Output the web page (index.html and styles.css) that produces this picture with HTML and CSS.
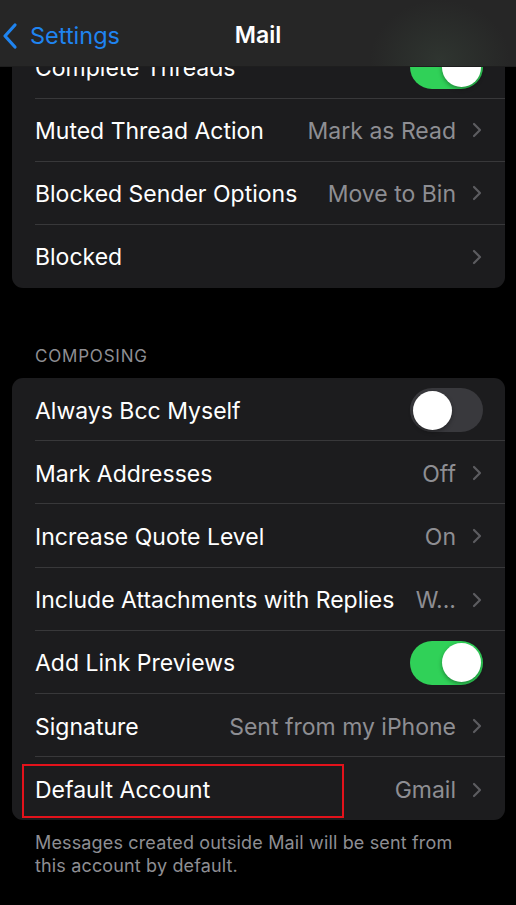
FILE: index.html
```html
<!DOCTYPE html>
<html lang="en">
<head>
    <meta charset="UTF-8">
    <meta name="viewport" content="width=device-width, initial-scale=1.0">
    <title>Mail</title>
    <link rel="stylesheet" href="styles.css">
</head>
<body>
    <!-- Barra de navegação (fica por cima da lista) -->
    <div class="navbar">
        <div class="back">
            <svg class="back-icon" width="18" height="28" viewBox="0 0 18 28">
                <path d="M14 3 L4 14 L14 25" fill="none" stroke="#1f84f0" stroke-width="3.2" stroke-linecap="round" stroke-linejoin="round"/>
            </svg>
            <span>Settings</span>
        </div>
        <div class="nav-title">Mail</div>
    </div>

    <div class="page">
        <div class="card card-top">
            <div class="row">
                <div class="row-body">
                    <span class="label">Complete Threads</span>
                    <span class="toggle on"><span class="knob"></span></span>
                </div>
            </div>
            <div class="row">
                <div class="row-body">
                    <span class="label">Muted Thread Action</span>
                    <span class="value">Mark as Read</span>
                    <svg class="chevron" width="10" height="16" viewBox="0 0 10 16"><path d="M2 2 L8 8 L2 14" fill="none" stroke="#5c5c60" stroke-width="2.2" stroke-linecap="round" stroke-linejoin="round"/></svg>
                </div>
            </div>
            <div class="row">
                <div class="row-body">
                    <span class="label">Blocked Sender Options</span>
                    <span class="value">Move to Bin</span>
                    <svg class="chevron" width="10" height="16" viewBox="0 0 10 16"><path d="M2 2 L8 8 L2 14" fill="none" stroke="#5c5c60" stroke-width="2.2" stroke-linecap="round" stroke-linejoin="round"/></svg>
                </div>
            </div>
            <div class="row">
                <div class="row-body">
                    <span class="label">Blocked</span>
                    <span class="value"></span>
                    <svg class="chevron" width="10" height="16" viewBox="0 0 10 16"><path d="M2 2 L8 8 L2 14" fill="none" stroke="#5c5c60" stroke-width="2.2" stroke-linecap="round" stroke-linejoin="round"/></svg>
                </div>
            </div>
        </div>

        <div class="section-header">COMPOSING</div>

        <div class="card card-composing">
            <div class="row">
                <div class="row-body">
                    <span class="label">Always Bcc Myself</span>
                    <span class="toggle"><span class="knob"></span></span>
                </div>
            </div>
            <div class="row">
                <div class="row-body">
                    <span class="label">Mark Addresses</span>
                    <span class="value">Off</span>
                    <svg class="chevron" width="10" height="16" viewBox="0 0 10 16"><path d="M2 2 L8 8 L2 14" fill="none" stroke="#5c5c60" stroke-width="2.2" stroke-linecap="round" stroke-linejoin="round"/></svg>
                </div>
            </div>
            <div class="row">
                <div class="row-body">
                    <span class="label">Increase Quote Level</span>
                    <span class="value">On</span>
                    <svg class="chevron" width="10" height="16" viewBox="0 0 10 16"><path d="M2 2 L8 8 L2 14" fill="none" stroke="#5c5c60" stroke-width="2.2" stroke-linecap="round" stroke-linejoin="round"/></svg>
                </div>
            </div>
            <div class="row">
                <div class="row-body">
                    <span class="label">Include Attachments with Replies</span>
                    <span class="value">W...</span>
                    <svg class="chevron" width="10" height="16" viewBox="0 0 10 16"><path d="M2 2 L8 8 L2 14" fill="none" stroke="#5c5c60" stroke-width="2.2" stroke-linecap="round" stroke-linejoin="round"/></svg>
                </div>
            </div>
            <div class="row">
                <div class="row-body">
                    <span class="label">Add Link Previews</span>
                    <span class="toggle on"><span class="knob"></span></span>
                </div>
            </div>
            <div class="row">
                <div class="row-body">
                    <span class="label">Signature</span>
                    <span class="value">Sent from my iPhone</span>
                    <svg class="chevron" width="10" height="16" viewBox="0 0 10 16"><path d="M2 2 L8 8 L2 14" fill="none" stroke="#5c5c60" stroke-width="2.2" stroke-linecap="round" stroke-linejoin="round"/></svg>
                </div>
            </div>
            <div class="row row-marked">
                <div class="row-body">
                    <span class="label">Default Account</span>
                    <span class="value">Gmail</span>
                    <svg class="chevron" width="10" height="16" viewBox="0 0 10 16"><path d="M2 2 L8 8 L2 14" fill="none" stroke="#5c5c60" stroke-width="2.2" stroke-linecap="round" stroke-linejoin="round"/></svg>
                </div>
                <!-- Destaque vermelho -->
                <div class="highlight"></div>
            </div>
        </div>

        <p class="section-footer">Messages created outside Mail will be sent from this account by default.</p>
    </div>
</body>
</html>
```

FILE: styles.css
```css
body {
    margin: 0;
    background-color: #000;
    font-family: Inter, "Noto Sans", sans-serif;
    color: #fff;
    width: 516px;
    height: 905px;
    overflow: hidden;
    position: relative;
}
.navbar {
    position: absolute;
    top: 0;
    left: 0;
    right: 0;
    height: 66px;
    background: radial-gradient(ellipse 70px 60px at 440px 60px, #2f3530, rgba(38, 38, 38, 0)), #262626;
    border-bottom: 1px solid #1e1e1e;
    z-index: 2;
}
.back {
    position: absolute;
    left: 1px;
    top: 21px;
    display: flex;
    align-items: center;
    gap: 11px;
    color: #1f84f0;
    font-size: 23.5px;
}
.nav-title {
    text-align: center;
    line-height: 70px;
    font-size: 23px;
    font-weight: 600;
}
.page {
    padding: 36px 11px 0 12px;
}
.card {
    background-color: #1c1c1e;
    border-radius: 11px;
    overflow: hidden;
}
.row {
    position: relative;
    padding-left: 23px;
}
.row-body {
    height: 63.2px;
    box-sizing: border-box;
    display: flex;
    align-items: center;
    border-bottom: 1px solid #38383a;
    padding-right: 23px;
}
.card-top .row-body {
    height: 63px;
}
.card-composing .row-body {
    padding-top: 2px;
}
.row:last-child .row-body {
    border-bottom: none;
}
.label {
    flex: 1;
    font-size: 23px;
    white-space: nowrap;
    padding-top: 1px;
}
.value {
    color: #8e8e93;
    font-size: 23px;
    margin-right: 16px;
    white-space: nowrap;
    padding-top: 1px;
}
.chevron {
    display: block;
}
.toggle {
    width: 73px;
    height: 44px;
    border-radius: 22px;
    background-color: #39393d;
    position: relative;
    margin-right: -1px;
}
.toggle.on {
    background-color: #30d158;
}
.knob {
    position: absolute;
    top: 2.5px;
    left: 2.5px;
    width: 39px;
    height: 39px;
    border-radius: 50%;
    background-color: #fff;
    box-shadow: 0 2px 4px rgba(0, 0, 0, 0.35);
}
.toggle.on .knob {
    left: 31.5px;
}
.section-header {
    color: #8e8e93;
    font-size: 17px;
    letter-spacing: 0.8px;
    padding: 57px 0 11px 23px;
    line-height: 22px;
}
.section-footer {
    color: #8e8e93;
    font-size: 18px;
    letter-spacing: 0.15px;
    line-height: 23px;
    margin: 11px 0 0;
    padding: 0 30px 0 23px;
}
.highlight {
    position: absolute;
    left: 10px;
    top: 7px;
    width: 318px;
    height: 50px;
    border: 2.5px solid #e3121b;
}
```
